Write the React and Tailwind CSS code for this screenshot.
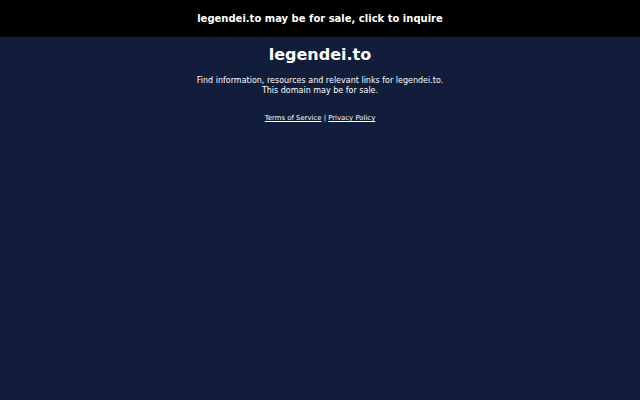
import React from 'react';

const App = () => {
  return (
    <div className="min-h-[400px] bg-[#111d3a] text-white font-['DejaVu_Sans',sans-serif]">
      {/* Sale banner */}
      <div className="h-[37px] bg-black flex items-center justify-center">
        <a href="#" className="text-[10px] font-bold text-white">legendei.to may be for sale, click to inquire</a>
      </div>

      <main className="flex flex-col items-center text-center">
        <h1 className="mt-[8px] text-[16px] font-bold leading-[20px]">legendei.to</h1>
        <p className="mt-[11px] text-[8px] leading-[10px]">
          Find information, resources and relevant links for legendei.to.
          <br />
          This domain may be for sale.
        </p>
        <div className="mt-[18px] text-[6.9px] leading-[9px]">
          <a href="#" className="underline">Terms of Service</a>
          <span> | </span>
          <a href="#" className="underline">Privacy Policy</a>
        </div>
      </main>
    </div>
  );
};

export default App;
